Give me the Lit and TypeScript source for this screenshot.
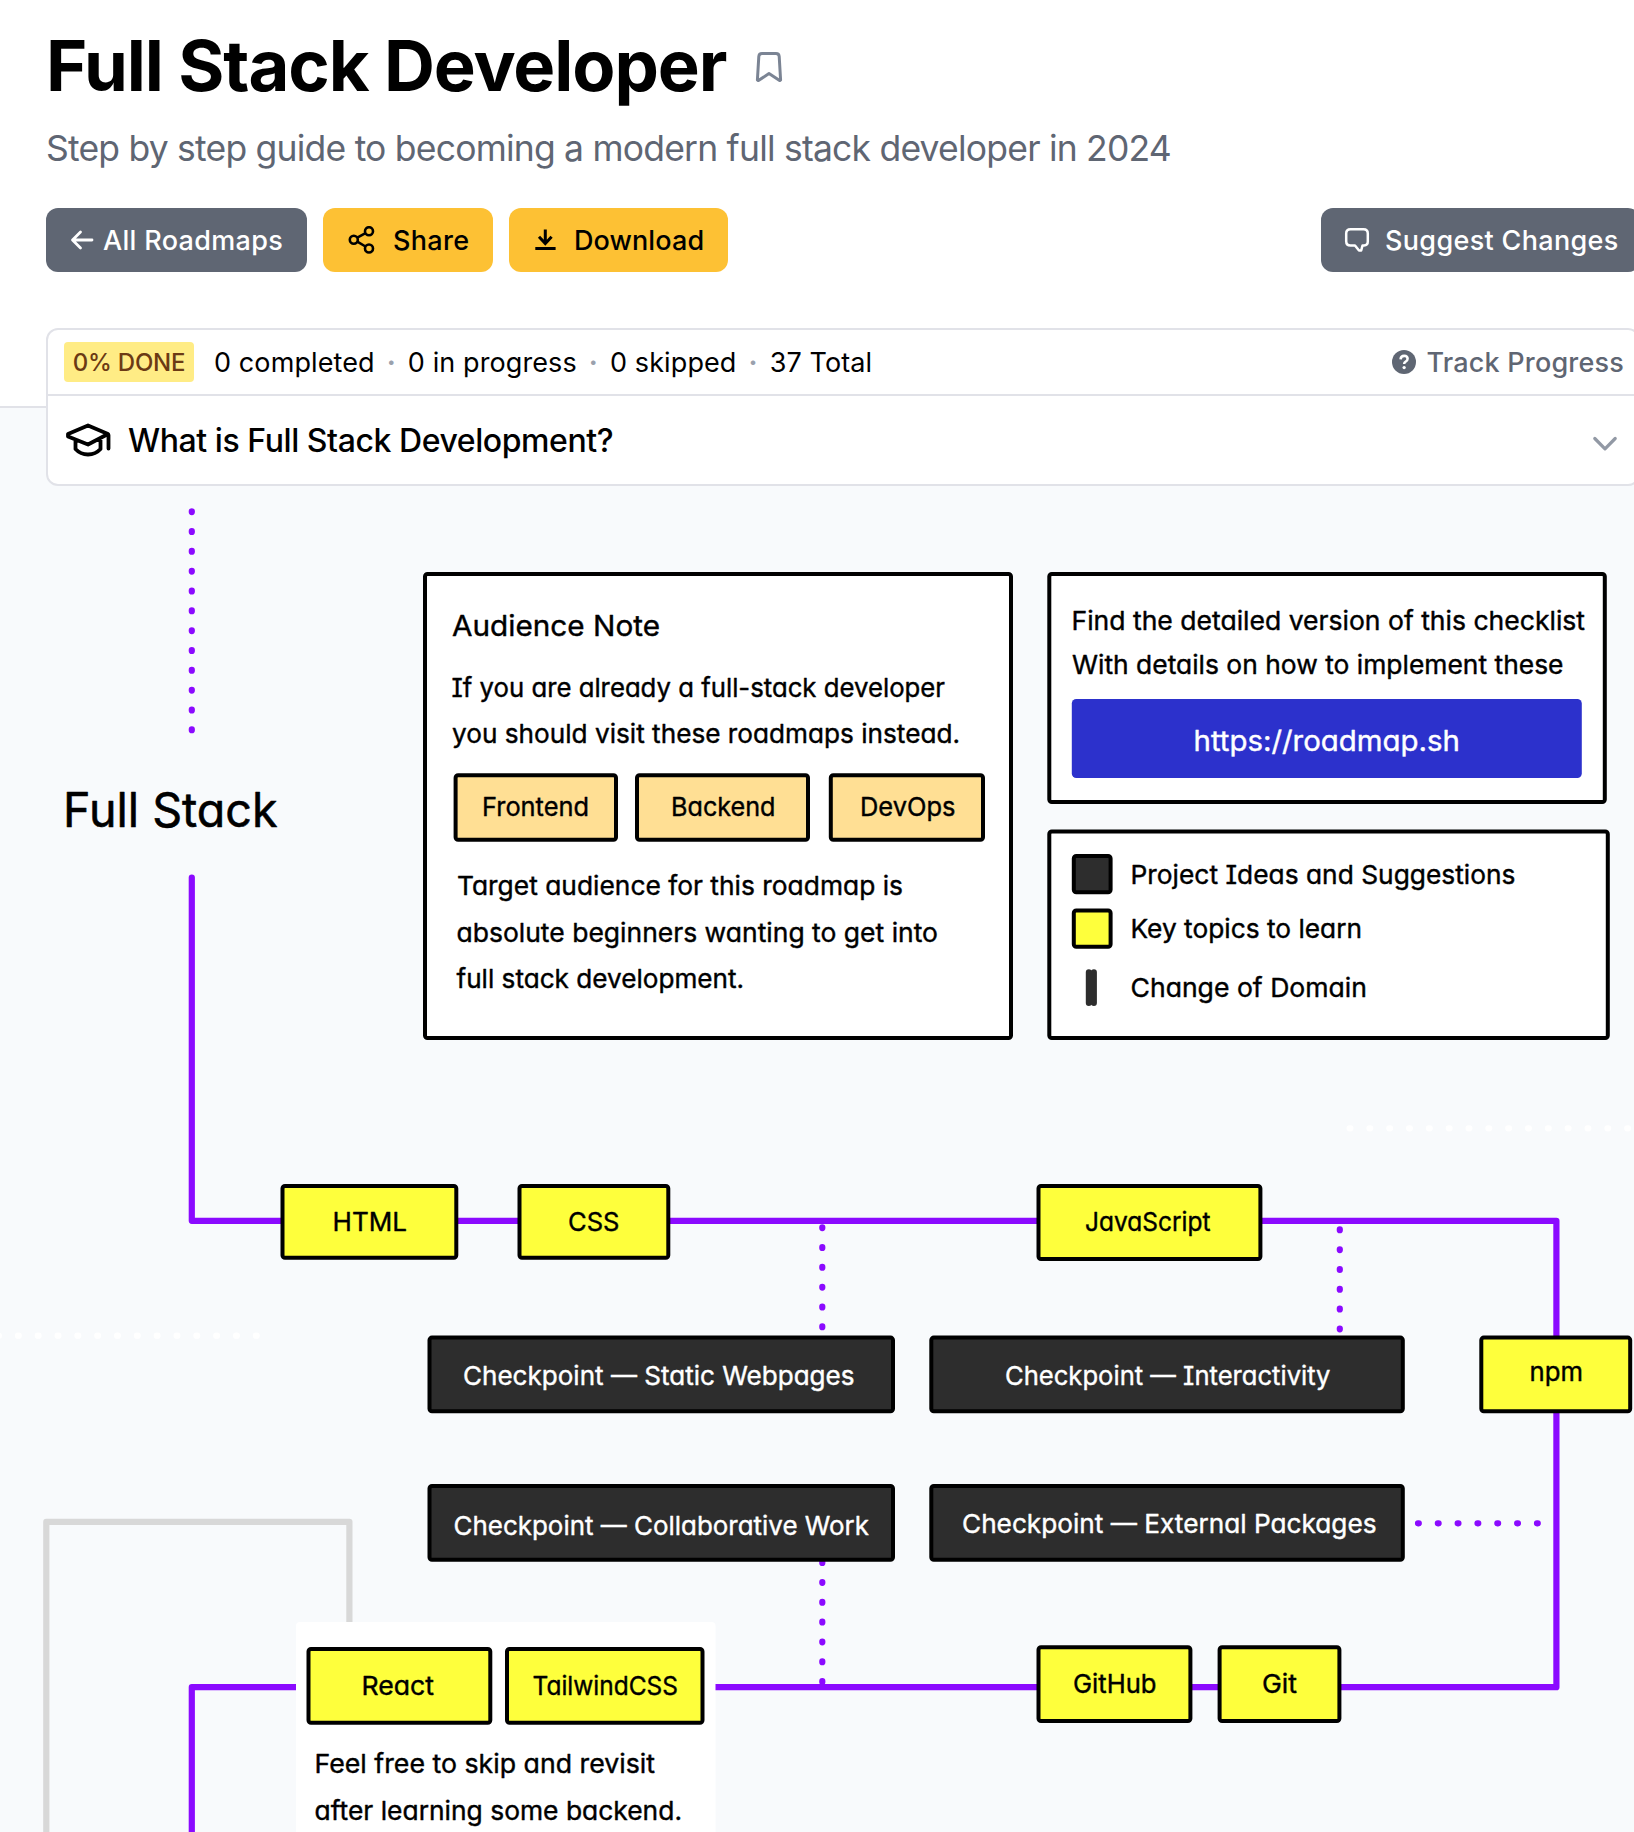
import { LitElement, html, svg, css } from "lit";
import { customElement } from "lit/decorators.js";

/** Half-width of a node's outline; boxes are given by their outer edges. */
const EDGE = 2;

type Box = { x1: number; y1: number; x2: number; y2: number; kind: string };
type Label = { t: string; x1: number; x2: number; y: number; kind?: string };

const BOXES: Box[] = [
  { x1: 423, y1: 572, x2: 1013, y2: 1040, kind: "card" },
  { x1: 1047.3, y1: 572, x2: 1606.8, y2: 804, kind: "card" },
  { x1: 1047.3, y1: 829.5, x2: 1609.8, y2: 1040, kind: "card" },
  { x1: 453.6, y1: 773.3, x2: 618, y2: 841.7, kind: "link" },
  { x1: 635, y1: 773.3, x2: 810, y2: 841.7, kind: "link" },
  { x1: 828.8, y1: 773.3, x2: 985, y2: 841.7, kind: "link" },
  { x1: 1071.8, y1: 854, x2: 1112.6, y2: 894.3, kind: "check" },
  { x1: 1071.8, y1: 908.5, x2: 1112.6, y2: 948.8, kind: "topic" },
  { x1: 280.5, y1: 1184, x2: 458.3, y2: 1259.7, kind: "topic" },
  { x1: 517.5, y1: 1184, x2: 670.3, y2: 1259.7, kind: "topic" },
  { x1: 1036.5, y1: 1184, x2: 1262.4, y2: 1261, kind: "topic" },
  { x1: 427.5, y1: 1335.6, x2: 895, y2: 1413.3, kind: "check" },
  { x1: 929.3, y1: 1335.6, x2: 1404.8, y2: 1413.3, kind: "check" },
  { x1: 1479.3, y1: 1335.6, x2: 1632.2, y2: 1413.3, kind: "topic" },
  { x1: 427.5, y1: 1484, x2: 895, y2: 1561.8, kind: "check" },
  { x1: 929.3, y1: 1484, x2: 1404.8, y2: 1561.8, kind: "check" },
  { x1: 306.5, y1: 1647, x2: 492.3, y2: 1724.7, kind: "topic" },
  { x1: 505, y1: 1647, x2: 704.5, y2: 1724.7, kind: "topic" },
  { x1: 1036.5, y1: 1645.2, x2: 1192.4, y2: 1723, kind: "topic" },
  { x1: 1217.6, y1: 1645.2, x2: 1341.4, y2: 1723, kind: "topic" },
];

const LABELS: Label[] = [
  { t: "Full Stack", x1: 63, x2: 277.5, y: 826.6, kind: "huge" },
  { t: "Audience Note", x1: 452, x2: 660, y: 635.7, kind: "large" },
  { t: "If you are already a full-stack developer", x1: 451.5, x2: 945, y: 696.7 },
  { t: "you should visit these roadmaps instead.", x1: 452, x2: 960, y: 742.7 },
  { t: "Frontend", x1: 482, x2: 589, y: 815.7 },
  { t: "Backend", x1: 671, x2: 775.5, y: 815.7 },
  { t: "DevOps", x1: 860, x2: 955.5, y: 815.7 },
  { t: "Target audience for this roadmap is", x1: 457, x2: 903, y: 894.7 },
  { t: "absolute beginners wanting to get into", x1: 456.5, x2: 938, y: 941.6 },
  { t: "full stack development.", x1: 456.5, x2: 744, y: 987.7 },
  { t: "Find the detailed version of this checklist", x1: 1071.5, x2: 1585, y: 630 },
  { t: "With details on how to implement these", x1: 1072, x2: 1563.5, y: 673.7 },
  { t: "https://roadmap.sh", x1: 1193.5, x2: 1460, y: 750.5, kind: "url" },
  { t: "Project Ideas and Suggestions", x1: 1130.5, x2: 1515.5, y: 884 },
  { t: "Key topics to learn", x1: 1130.5, x2: 1362, y: 938 },
  { t: "Change of Domain", x1: 1130.5, x2: 1367, y: 996.7 },
  { t: "HTML", x1: 332.5, x2: 407, y: 1230.7 },
  { t: "CSS", x1: 568, x2: 619.5, y: 1230.7 },
  { t: "JavaScript", x1: 1085, x2: 1210.5, y: 1230.7 },
  { t: "Checkpoint — Static Webpages", x1: 463, x2: 854.5, y: 1385, kind: "light" },
  { t: "Checkpoint — Interactivity", x1: 1005, x2: 1330.5, y: 1385, kind: "light" },
  { t: "npm", x1: 1529.5, x2: 1583, y: 1381 },
  { t: "Checkpoint — Collaborative Work", x1: 453.5, x2: 869, y: 1534.7, kind: "light" },
  { t: "Checkpoint — External Packages", x1: 962, x2: 1376.5, y: 1532.7, kind: "light" },
  { t: "React", x1: 361.5, x2: 434, y: 1694.7 },
  { t: "TailwindCSS", x1: 532.5, x2: 678, y: 1694.7 },
  { t: "GitHub", x1: 1073, x2: 1156.5, y: 1692.7 },
  { t: "Git", x1: 1262, x2: 1297, y: 1692.7 },
  { t: "Feel free to skip and revisit", x1: 314.5, x2: 655, y: 1772.7 },
  { t: "after learning some backend.", x1: 314.5, x2: 682, y: 1819.7 },
];

@customElement("roadmap-map")
export class RoadmapMap extends LitElement {
  static styles = css`
    :host { display: block; }
    svg { display: block; }
    .card { fill: #fff; }
    .link { fill: #ffdf94; }
    .topic { fill: #feff3c; }
    .check { fill: #2d2d2d; }
    .box { stroke: #000; stroke-width: 4; }
    .path { fill: none; stroke: #8b0aff; stroke-width: 6.2; stroke-linecap: round; stroke-linejoin: round; }
    .dots { stroke-dasharray: 0.8 19.03; }
    .gray { stroke: #d8d8d8; }
    .white { stroke: #fff; }
    .label {
      font: 420 26px Inter, "Liberation Sans", sans-serif; font-feature-settings: "cv11", "cv08";
      fill: #000; stroke: #000; stroke-width: 0.4; stroke-linejoin: round;
    }
    .large { font-size: 29px; }
    .huge { font-size: 48px; font-weight: 400; stroke-width: 0.6; }
    .light, .url { fill: #fff; stroke: #fff; }
    .url { font-size: 28px; }
  `;

  render() {
    return html`<svg width="1634" height="1344" viewBox="0 488 1634 1344" role="img" aria-label="Full stack roadmap">
      <path class="path white dots" d="M1349.6 1128.3H1640"></path>
      <path class="path white dots" d="M256.7 1335.7H-10"></path>
      <path class="path dots" d="M191.8 511.3V731"></path>
      <path class="path" d="M191.8 877.5V1220.8H1556.4V1687.2H191.8V1840"></path>
      <path class="path gray" d="M46.3 1840V1521.8H349.4V1640"></path>
      <path class="path dots" d="M822.3 1227.3V1329"></path>
      <path class="path dots" d="M1339.8 1229.4V1331"></path>
      <path class="path dots" d="M822.3 1562.2V1684"></path>
      <path class="path dots" d="M1418 1523.3H1540"></path>
      <rect class="card" x="296" y="1622" width="419.5" height="240" rx="4"></rect>
      ${BOXES.map((b) => svg`<rect class="box ${b.kind}" x=${b.x1 + EDGE} y=${b.y1 + EDGE}
        width=${b.x2 - b.x1 - 2 * EDGE} height=${b.y2 - b.y1 - 2 * EDGE} rx="2.5"></rect>`)}
      <rect x="1071.8" y="699" width="510" height="79" rx="4.5" fill="#2c31cc"></rect>
      <path d="M1088.800 972.300V1003M1093.900 972.300V1003" stroke="#2d2d2d" stroke-width="6" stroke-linecap="round"></path>
      ${LABELS.map((l) => svg`<text class="label ${l.kind ?? ""}" x=${l.x1} y=${l.y}
        textLength=${l.x2 - l.x1} lengthAdjust="spacingAndGlyphs">${l.t}</text>`)}
    </svg>`;
  }
}

@customElement("app-root")
export class AppRoot extends LitElement {
  static styles = css`
    :host {
      display: block; width: 1634px; height: 1832px; overflow: hidden;
      background: #f8fafc; color: #000;
      font-family: Inter, "Liberation Sans", sans-serif;
    }
    * { box-sizing: border-box; }
    .header { height: 408px; background: #fff; border-bottom: 2px solid #e1e2e8; padding: 22px 0 0 46px; }
    .title-row { display: flex; align-items: center; gap: 29px; height: 88px; }
    h1 { margin: 0; font-size: 70.5px; line-height: 88px; font-weight: 700; letter-spacing: -1.1px; white-space: nowrap; }
    .sub { margin: 17px 0 0; font-size: 35.5px; line-height: 44px; color: #5f6673; letter-spacing: -0.79px; white-space: nowrap; }
    .bar { display: flex; gap: 16px; margin-top: 37px; width: 1594px; }
    .btn { display: flex; align-items: center; height: 64px; border-radius: 12px; font-size: 27px; font-weight: 550; letter-spacing: 0.33px; white-space: nowrap; }
    .dark { background: #5f6673; color: #fff; }
    .gold { background: #fdc134; }
    .all { width: 261px; padding-left: 24px; gap: 9px; }
    .share { width: 170px; padding-left: 24px; gap: 17px; }
    .down { width: 219px; padding-left: 24px; gap: 15px; letter-spacing: 0.1px; }
    .suggest { margin-left: auto; width: 319px; padding-left: 22px; gap: 14px; }
    .panel {
      position: relative; width: 1594px; height: 158px; margin: -80px 0 0 46px;
      background: #fff; border: 2px solid #e1e2e8; border-radius: 12px;
    }
    .stats { display: flex; align-items: center; height: 66px; border-bottom: 2px solid #e1e2e8; padding: 0 14px 0 16px; font-size: 27px; letter-spacing: 0.1px; white-space: nowrap; }
    .badge { background: #ffec85; color: #6b3a14; border-radius: 4px; height: 40px; line-height: 41px; width: 130px; text-align: center; font-size: 24px; font-weight: 550; letter-spacing: -0.2px; margin-right: 20px; }
    .dot { color: #9aa1ad; width: 33.2px; text-align: center; font-weight: 700; }
    .track { margin-left: auto; display: flex; align-items: center; gap: 10px; color: #5f6673; font-weight: 500; letter-spacing: 0.2px; }
    .what { display: flex; align-items: center; height: 88px; padding: 0 20px 0 17px; font-size: 32px; font-weight: 550; letter-spacing: -0.43px; white-space: nowrap; gap: 17px; }
    .chev { margin: 7px 0 0 auto; }
    svg { display: block; flex: none; }
    .map { display: block; margin-top: 2px; }
  `;

  render() {
    return html`
      <header class="header">
        <div class="title-row">
          <h1>Full Stack Developer</h1>
          <svg width="28" height="34" viewBox="0 0 28 34" fill="none" stroke="#7b8494" stroke-width="3" stroke-linejoin="round" stroke-linecap="round"><path d="M7 4.500h14q3 0 3.200 3L25.600 31l-1 .6L14 24.500 3.400 31.600l-1-.6L3.800 7.500Q4 4.500 7 4.500z"></path></svg>
        </div>
        <p class="sub">Step by step guide to becoming a modern full stack developer in 2024</p>
        <div class="bar">
          <div class="btn dark all">
            <svg width="24" height="20" viewBox="0 0 24 20" fill="none" stroke="#fff" stroke-width="2.800" stroke-linecap="round" stroke-linejoin="round"><path d="M22 10H3M10.500 2L2.500 10l8 8"></path></svg>
            <span>All Roadmaps</span>
          </div>
          <div class="btn gold share">
            <svg width="29" height="28" viewBox="0 0 29 28" fill="none" stroke="#000" stroke-width="2.600"><circle cx="6.800" cy="13.700" r="4"></circle><circle cx="22" cy="5.200" r="4"></circle><circle cx="22" cy="22.500" r="4"></circle><path d="M10.300 11.700l8.200-4.500M10.300 15.700l8.200 4.800"></path></svg>
            <span>Share</span>
          </div>
          <div class="btn gold down">
            <svg width="26" height="24" viewBox="0 0 26 24" fill="none" stroke="#000" stroke-width="3"><path d="M12.300 1.500v14M6 8.800l6.300 6.700 6.300-6.700M2.300 20.500h20.300"></path></svg>
            <span>Download</span>
          </div>
          <div class="btn dark suggest">
            <svg width="28" height="28" viewBox="0 0 28 28" fill="none" stroke="#fff" stroke-width="2.500" stroke-linejoin="round"><path d="M7.500 3.200h13q4.300 0 4.300 4.300v8q0 3.800-3.800 4h-1.500l-1.300 5h-2.200l-4-5H7.500q-4.300 0-4.300-4.300V7.500q0-4.300 4.300-4.300z"></path></svg>
            <span>Suggest Changes</span>
          </div>
        </div>
      </header>
      <section class="panel">
        <div class="stats">
          <span class="badge">0% DONE</span>
          <span>0 completed</span><span class="dot">·</span>
          <span>0 in progress</span><span class="dot">·</span>
          <span>0 skipped</span><span class="dot">·</span>
          <span>37 Total</span>
          <span class="track">
            <svg width="24" height="24" viewBox="0 0 16 16"><circle cx="8" cy="8" r="8" fill="#5f6673"></circle><path d="M5.700 6.200q.2-2.300 2.400-2.300 2.300.1 2.300 2 0 1.200-1.300 1.800Q8.100 8.200 8.100 9.300" fill="none" stroke="#fff" stroke-width="1.700"></path><circle cx="8.100" cy="11.700" r="1.100" fill="#fff"></circle></svg>
            <span>Track Progress</span>
          </span>
        </div>
        <div class="what">
          <svg width="46" height="34" viewBox="0 0 46 34" fill="none" stroke="#000" stroke-width="3.800" stroke-linejoin="round" stroke-linecap="round"><path d="M23 2.500L43 11 23 21.500 3 13.500v-2.500zM10.500 17v9q5 5.500 12.500 5.500t12.500-5.500v-9M43.500 12v13.500"></path></svg>
          <span>What is Full Stack Development?</span>
          <svg class="chev" width="26" height="16" viewBox="0 0 26 16" fill="none" stroke="#9299a5" stroke-width="3.200" stroke-linecap="round" stroke-linejoin="round"><path d="M2.800 2.500L13 12.800 23.200 2.500"></path></svg>
        </div>
      </section>
      <roadmap-map class="map"></roadmap-map>
    `;
  }
}
